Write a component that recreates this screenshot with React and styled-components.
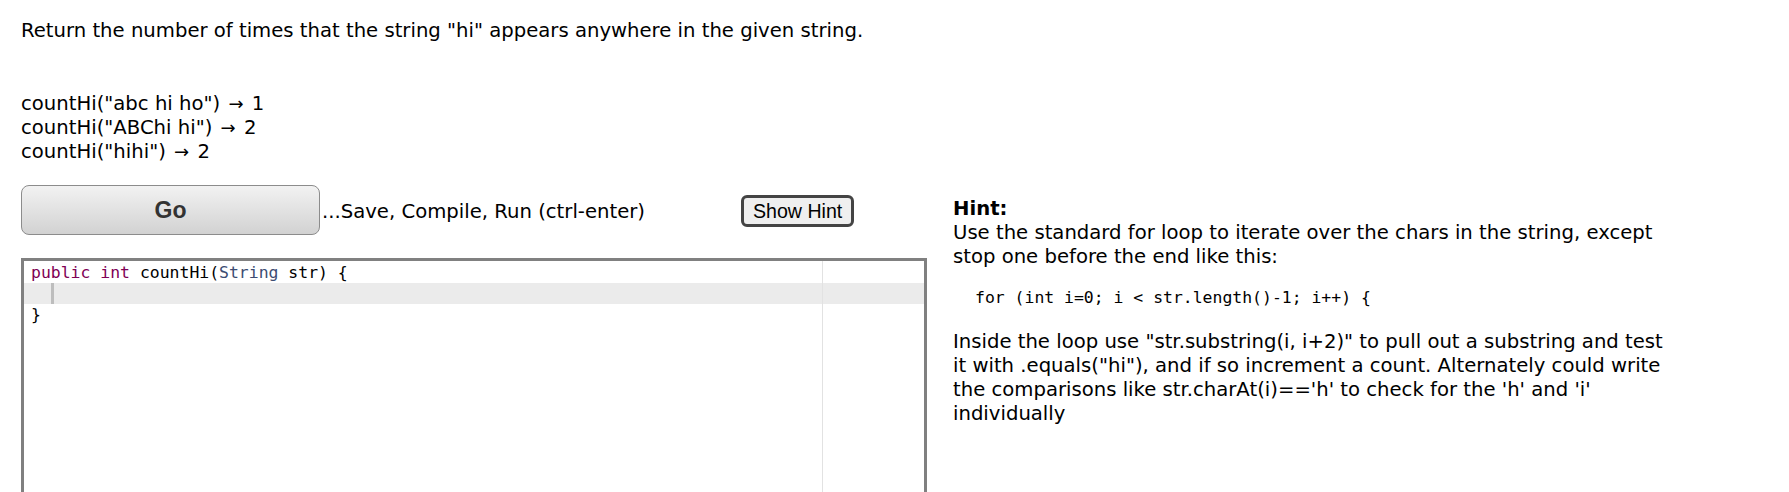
import React from 'react'
import styled, { createGlobalStyle } from 'styled-components'

const GlobalStyle = createGlobalStyle`
    body {
        margin: 0;
        background: #fff;
        color: #000;
        font-family: "DejaVu Sans", Verdana, sans-serif;
        font-size: 19.65px;
    }
`

const Page = styled.div`
    padding: 19px 0 0 21px;
    line-height: 24px;
`
const Prompt = styled.p`
    margin: 0;
`
const Examples = styled.div`
    margin-top: 49px;
`
const Arrow = styled.span`
    font-size: 18px;
    margin: 0 2px;
`
const Workspace = styled.div`
    display: flex;
    align-items: flex-start;
    margin-top: 21px;
`
const LeftCol = styled.div`
    width: 906px;
    flex: 0 0 906px;
`
const Toolbar = styled.div`
    display: flex;
    align-items: baseline;
`
const GoButton = styled.button`
    box-sizing: border-box;
    width: 299px;
    height: 50px;
    border: 1px solid #8c8c8c;
    border-radius: 8px;
    background: linear-gradient(#f2f2f2, #d2d2d2);
    color: #333;
    font-family: "Liberation Sans", Arial, sans-serif;
    font-weight: bold;
    font-size: 23px;
    padding: 0;
`
const Caption = styled.span`
    flex: 0 0 419px;
    margin-left: 2px;
`
const HintButton = styled.button`
    box-sizing: border-box;
    height: 32px;
    padding: 0 9px;
    border: 3px solid #444;
    border-radius: 6px;
    background: #efefef;
    color: #000;
    font-family: "Liberation Sans", Arial, sans-serif;
    font-size: 19.6px;
`
const Editor = styled.div`
    position: relative;
    margin-top: 23px;
    height: 300px;
    border: 3px solid #808080;
    padding-top: 1px;
    font-family: "DejaVu Sans Mono", Consolas, monospace;
    font-size: 16.45px;
    line-height: 21px;
    overflow: hidden;
`
const CodeLine = styled.div`
    height: 21px;
    padding-left: 7px;
    white-space: pre;
    background: ${p => (p.$active ? '#ebebeb' : 'transparent')};
`
const Keyword = styled.span`
    color: #7f0055;
`
const TypeName = styled.span`
    color: #3c4c72;
`
const Cursor = styled.span`
    display: inline-block;
    width: 3px;
    height: 21px;
    vertical-align: top;
    background: #bdbdbd;
`
const PrintMargin = styled.div`
    position: absolute;
    top: 0;
    bottom: 0;
    left: 798px;
    width: 1px;
    background: #e2e2e2;
`
const HintCol = styled.div`
    margin-left: 26px;
    padding-top: 12px;
    white-space: nowrap;
`
const HintTitle = styled.div`
    font-weight: bold;
`
const HintCode = styled.pre`
    margin: 18px 0 21px 22px;
    font-family: "DejaVu Sans Mono", Consolas, monospace;
    font-size: 16.45px;
    line-height: 22px;
`

const App = () => {
    return (
        <Page>
            <GlobalStyle />
            <Prompt>Return the number of times that the string "hi" appears anywhere in the given string.</Prompt>
            <Examples>
                <div>countHi("abc hi ho") <Arrow>→</Arrow> 1</div>
                <div>countHi("ABChi hi") <Arrow>→</Arrow> 2</div>
                <div>countHi("hihi") <Arrow>→</Arrow> 2</div>
            </Examples>
            <Workspace>
                <LeftCol>
                    <Toolbar>
                        <GoButton>Go</GoButton>
                        <Caption>...Save, Compile, Run (ctrl-enter)</Caption>
                        <HintButton>Show Hint</HintButton>
                    </Toolbar>
                    <Editor>
                        <CodeLine>
                            <Keyword>public</Keyword> <Keyword>int</Keyword> countHi(<TypeName>String</TypeName> str) {'{'}
                        </CodeLine>
                        <CodeLine $active>{'  '}<Cursor /></CodeLine>
                        <CodeLine>{'}'}</CodeLine>
                        <PrintMargin />
                    </Editor>
                </LeftCol>
                <HintCol>
                    <HintTitle>Hint:</HintTitle>
                    Use the standard for loop to iterate over the chars in the string, except<br />
                    stop one before the end like this:
                    <HintCode>for (int i=0; i &lt; str.length()-1; i++) {'{'}</HintCode>
                    Inside the loop use "str.substring(i, i+2)" to pull out a substring and test<br />
                    it with .equals("hi"), and if so increment a count. Alternately could write<br />
                    the comparisons like str.charAt(i)=='h' to check for the 'h' and 'i'<br />
                    individually
                </HintCol>
            </Workspace>
        </Page>
    )
}

export default App
